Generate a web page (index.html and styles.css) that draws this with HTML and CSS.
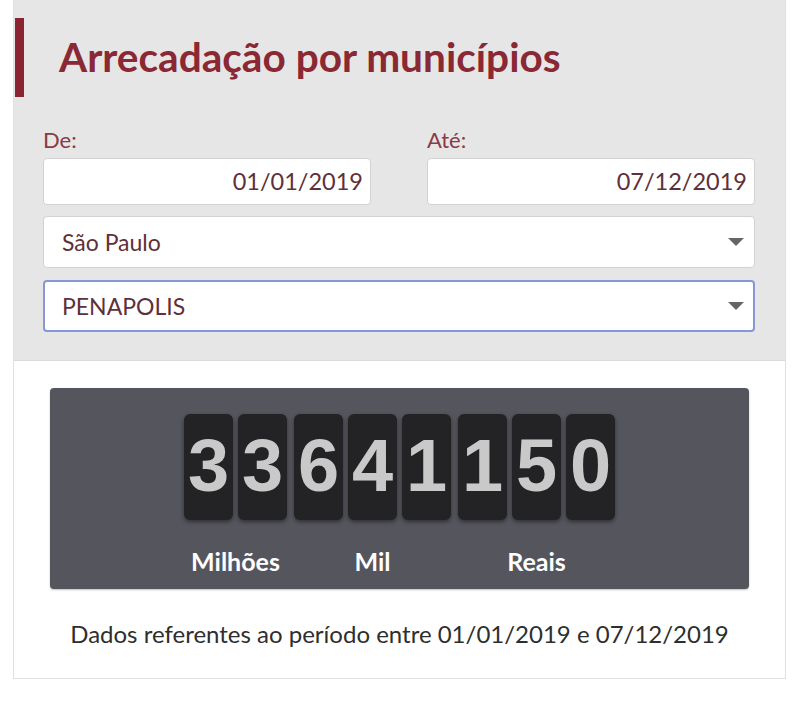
FILE: index.html
```html
<!DOCTYPE html>
<html lang="pt-BR">
<head>
<meta charset="utf-8">
<title>Arrecadação por municípios</title>
<link rel="stylesheet" href="styles.css">
</head>
<body>
<div class="card">
  <div class="header">
    <h1 class="title">Arrecadação por municípios</h1>
    <div class="form">
      <div class="dates">
        <div class="field">
          <div class="label">De:</div>
          <div class="input">01/01/2019</div>
        </div>
        <div class="field">
          <div class="label">Até:</div>
          <div class="input">07/12/2019</div>
        </div>
      </div>
      <div class="select"><span>São Paulo</span><span class="arrow"></span></div>
      <div class="select focused"><span>PENAPOLIS</span><span class="arrow"></span></div>
    </div>
  </div>
  <div class="body">
    <div class="counter">
      <div class="group">
        <div class="digits"><span class="tile">3</span><span class="tile">3</span></div>
        <div class="unit">Milhões</div>
      </div>
      <div class="group">
        <div class="digits"><span class="tile">6</span><span class="tile">4</span><span class="tile">1</span></div>
        <div class="unit">Mil</div>
      </div>
      <div class="group">
        <div class="digits"><span class="tile">1</span><span class="tile">5</span><span class="tile">0</span></div>
        <div class="unit">Reais</div>
      </div>
    </div>
    <p class="note">Dados referentes ao período entre 01/01/2019 e 07/12/2019</p>
  </div>
</div>
</body>
</html>
```
FILE: styles.css
```css
html, body {
  margin: 0;
  padding: 0;
  background: #ffffff;
}
body {
  font-family: Lato, "Open Sans", sans-serif;
}
.card {
  margin-left: 13px;
  width: 771px;
  border: 1px solid #e0e0e0;
  border-top: none;
}
.header {
  background: #e6e6e6;
  padding: 18px 30px 28px 0;
  border-bottom: 1px solid #dadada;
  height: 314px;
}
.title {
  margin: 0 0 0 1px;
  border-left: 9px solid #8b2332;
  height: 79px;
  box-sizing: border-box;
  padding: 17px 0 0 35px;
  font-size: 40.6px;
  line-height: 44px;
  font-weight: 700;
  color: #8a2834;
}
.form {
  padding-left: 29px;
  margin-top: 29.5px;
}
.dates {
  display: grid;
  grid-template-columns: 1fr 1fr;
  column-gap: 56px;
}
.label {
  font-size: 22px;
  line-height: 26px;
  color: #8b3a46;
  margin-bottom: 5.5px;
}
.input {
  height: 47px;
  box-sizing: border-box;
  background: #ffffff;
  border: 1px solid #d2d2d2;
  border-radius: 4px;
  text-align: right;
  padding-right: 7px;
  font-size: 23.5px;
  line-height: 45px;
  color: #5f3038;
}
.select {
  margin-top: 11px;
  height: 52px;
  box-sizing: border-box;
  background: #ffffff;
  border: 1px solid #d2d2d2;
  border-radius: 4px;
  display: flex;
  align-items: center;
  justify-content: space-between;
  padding: 0 10px 0 18px;
  font-size: 23px;
  color: #5f3038;
}
.select.focused {
  margin-top: 12px;
  border: 2px solid #8597d6;
  padding-left: 17px;
  padding-right: 9px;
}
.arrow {
  width: 0;
  height: 0;
  border-left: 8px solid transparent;
  border-right: 8px solid transparent;
  border-top: 8px solid #666666;
}
.body {
  padding: 27px 36px 30px;
}
.counter {
  background: #55555e;
  border-radius: 4px;
  padding: 26px 0 14px;
  display: flex;
  justify-content: center;
  gap: 7px;
  box-shadow: 0 1px 2px rgba(0,0,0,0.25);
}
.group {
  display: flex;
  flex-direction: column;
  align-items: center;
}
.digits {
  display: flex;
  gap: 5px;
}
.tile {
  width: 49px;
  height: 106px;
  background: #232325;
  border-radius: 6px;
  box-shadow: 0 2px 4px rgba(0,0,0,0.45);
  text-align: center;
  font-family: "Liberation Sans", Arial, sans-serif;
  font-weight: 700;
  font-size: 74px;
  line-height: 104px;
  color: #c9c9c9;
}
.unit {
  margin-top: 27px;
  font-size: 25px;
  line-height: 28px;
  font-weight: 700;
  color: #ffffff;
}
.note {
  margin: 30.7px 0 0;
  text-align: center;
  font-size: 24px;
  line-height: 28px;
  color: #2e2e2e;
}
```
